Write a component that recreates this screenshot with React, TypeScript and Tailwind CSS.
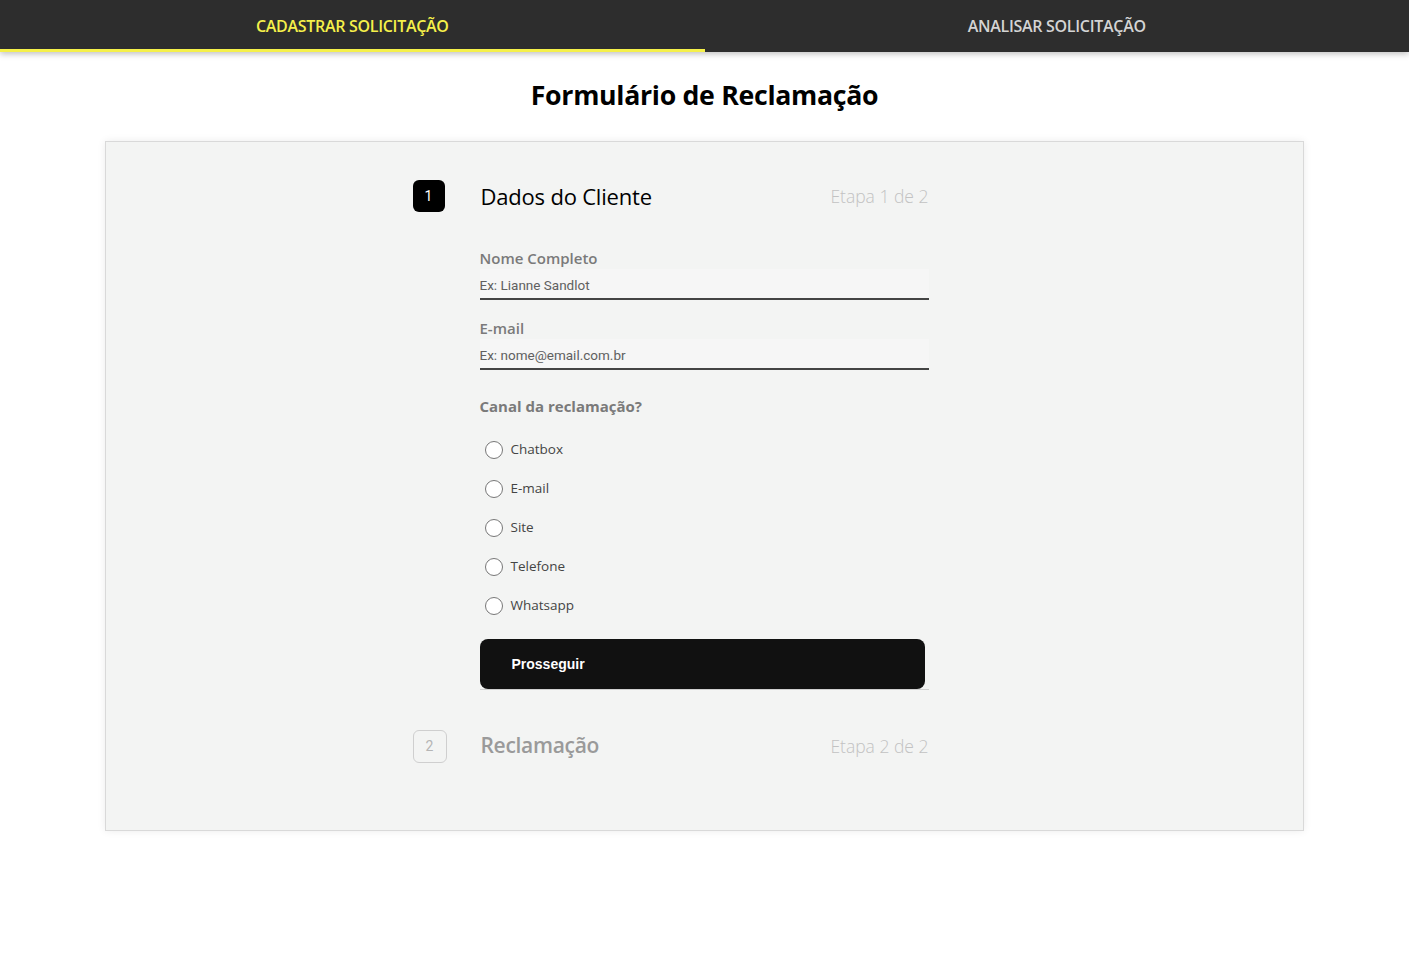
import { useState } from "react";

const canais = ["Chatbox", "E-mail", "Site", "Telefone", "Whatsapp"];

export default function App() {
  const [tab, setTab] = useState(0);
  const [canal, setCanal] = useState("");

  return (
    <div className="min-h-screen bg-white font-['Open_Sans',sans-serif]">
      {/* Header tabs */}
      <header className="flex h-[52px] bg-[#2d2d2d] shadow-[0_2px_6px_rgba(0,0,0,0.25)]">
        {["CADASTRAR SOLICITAÇÃO", "ANALISAR SOLICITAÇÃO"].map((label, i) => (
          <button
            key={label}
            onClick={() => setTab(i)}
            className={`flex-1 flex items-center justify-center pt-[2px] text-[16px] font-semibold tracking-[-0.3px] border-b-[3px] ${
              tab === i ? "text-[#f5f04a] border-[#f5f04a]" : "text-[#d4d4d4] border-transparent"
            }`}
          >
            {label}
          </button>
        ))}
      </header>

      <main className="px-[105px] pb-10">
        <h1 className="text-center text-[26.7px] font-bold text-black pt-[23px] pb-[26px] tracking-[-0.3px]">
          Formulário de Reclamação
        </h1>

        <div className="bg-[#f3f4f3] border border-[#d9d9d9] shadow-[0_0_8px_rgba(0,0,0,0.08)] h-[690px] flex justify-center pt-[38px]">
          <div className="w-[584px] pr-[68px]">
            {/* Step 1 */}
            <div className="flex items-center h-[32px]">
              <div className="w-8 h-8 rounded-md bg-black text-white flex items-center justify-center text-[14px] font-['Roboto',sans-serif]">
                1
              </div>
              <h2 className="ml-[36px] text-[22px] text-black tracking-[-0.2px]">Dados do Cliente</h2>
              <span className="ml-auto text-[17.5px] text-[#c2c2c2] font-light">Etapa 1 de 2</span>
            </div>

            <div className="ml-[67px] mt-[35px]">
              <label className="block text-[15px] font-semibold text-[#7a7a7a] leading-[22px]">Nome Completo</label>
              <input
                placeholder="Ex: Lianne Sandlot"
                className="block w-full h-[31px] bg-[#f6f6f6] border-b-2 border-[#444] text-[13.5px] text-[#555] placeholder:text-[#606060] font-['Roboto',sans-serif] outline-none pt-[2px]"
              />

              <label className="block text-[15px] font-semibold text-[#7a7a7a] leading-[22px] mt-[17px]">E-mail</label>
              <input
                placeholder="Ex: nome@email.com.br"
                className="block w-full h-[31px] bg-[#f6f6f6] border-b-2 border-[#444] text-[13.5px] text-[#555] placeholder:text-[#606060] font-['Roboto',sans-serif] outline-none pt-[2px]"
              />

              <p className="mt-[25px] text-[15px] font-bold text-[#7a7a7a] leading-[22px]">Canal da reclamação?</p>

              <div className="mt-[13px] flex flex-col">
                {canais.map(c => (
                  <label key={c} className="flex items-center h-[39px] pl-[5px] cursor-pointer">
                    <input
                      type="radio"
                      name="canal"
                      checked={canal === c}
                      onChange={() => setCanal(c)}
                      className="appearance-none w-[18px] h-[18px] rounded-full border border-[#777] bg-white checked:border-[5px] checked:border-black"
                    />
                    <span className="ml-[8px] text-[13.5px] text-[#444]">{c}</span>
                  </label>
                ))}
              </div>

              <div className="mt-[14px] border-b border-[#d0d0d0]">
                <button className="w-[445px] h-[50px] rounded-lg bg-[#111] text-white text-left pl-[32px] text-[14px] font-bold font-['Liberation_Sans',Arial,sans-serif]">
                  Prosseguir
                </button>
              </div>
            </div>

            {/* Step 2 */}
            <div className="flex items-center h-[34px] mt-[39px]">
              <div className="w-[34px] h-[33px] rounded-md border border-[#cfcfcf] text-[#b5b5b5] flex items-center justify-center text-[14px] font-['Roboto',sans-serif]">
                2
              </div>
              <h2 className="ml-[34px] text-[21px] font-semibold text-[#9a9a9a] tracking-[-0.3px]">Reclamação</h2>
              <span className="ml-auto text-[17.5px] text-[#c2c2c2] font-light">Etapa 2 de 2</span>
            </div>
          </div>
        </div>
      </main>
    </div>
  );
}
